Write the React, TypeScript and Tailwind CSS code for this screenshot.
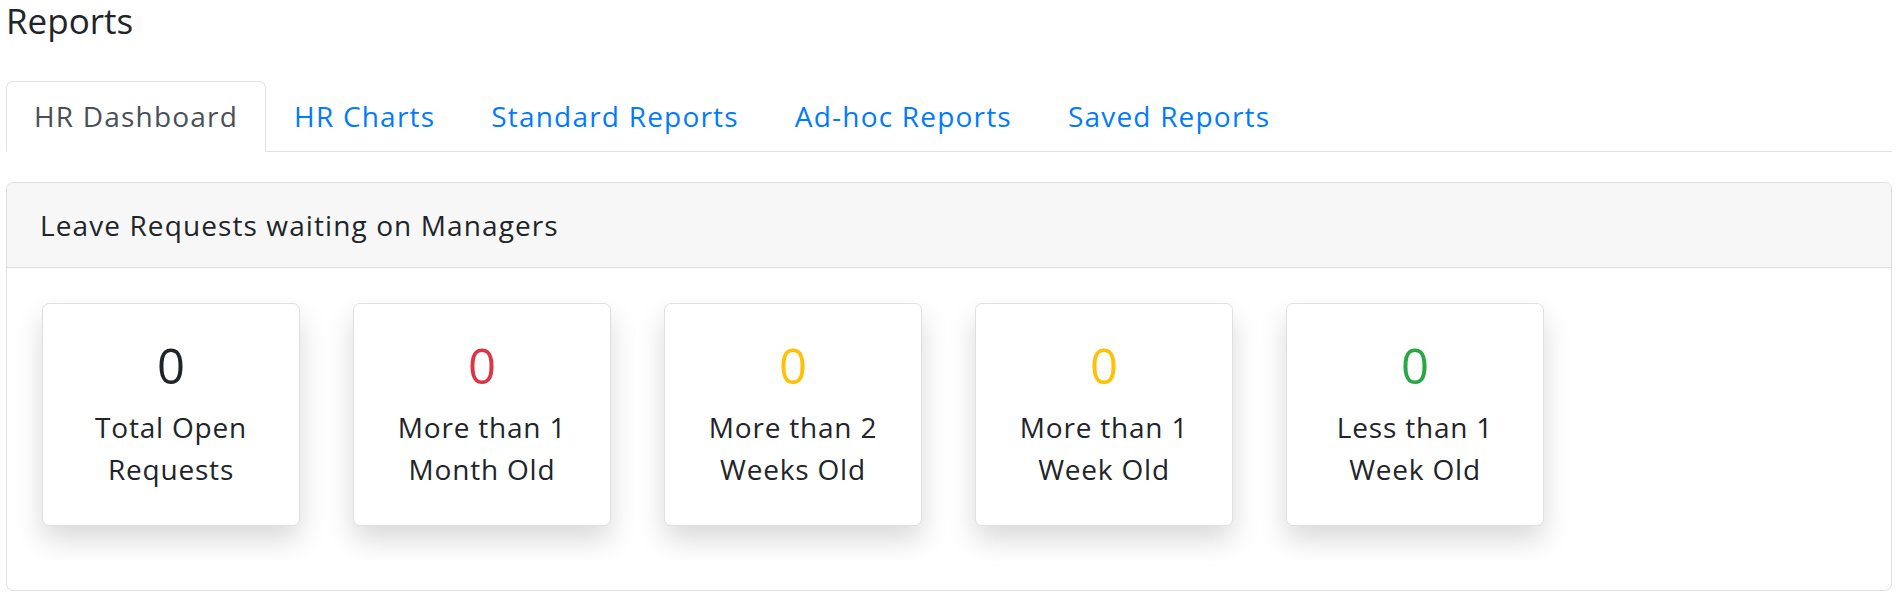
import React from 'react';

const tabs = ['HR Dashboard', 'HR Charts', 'Standard Reports', 'Ad-hoc Reports', 'Saved Reports'];

const stats: { value: number; color: string; line1: string; line2: string }[] = [
  { value: 0, color: 'text-[#212529]', line1: 'Total Open', line2: 'Requests' },
  { value: 0, color: 'text-[#dc3545]', line1: 'More than 1', line2: 'Month Old' },
  { value: 0, color: 'text-[#ffc107]', line1: 'More than 2', line2: 'Weeks Old' },
  { value: 0, color: 'text-[#ffc107]', line1: 'More than 1', line2: 'Week Old' },
  { value: 0, color: 'text-[#28a745]', line1: 'Less than 1', line2: 'Week Old' },
];

export default function App() {
  return (
    <div className="min-h-screen bg-white px-[6px] text-[#212529] font-['Open_Sans',sans-serif]">
      <h4 className="text-[35px] leading-[42px] mb-[39px]">Reports</h4>

      {/* tabs */}
      <nav className="flex border-b border-[#dee2e6]">
        {tabs.map((t, i) => (
          <button
            key={t}
            className={
              i === 0
                ? 'px-[27px] pt-[13px] pb-[14px] text-[28px] leading-[42px] tracking-[1.2px] border border-[#dee2e6] border-b-white rounded-t-[7px] -mb-px text-[#495057] bg-white'
                : 'px-[27px] pt-[13px] pb-[14px] text-[28px] leading-[42px] tracking-[1.2px] border border-transparent -mb-px text-[#007bff]'
            }
          >
            {t}
          </button>
        ))}
      </nav>

      {/* leave requests card */}
      <div className="mt-[30px] border border-[#dfdfdf] rounded-[7px] overflow-hidden">
        <div className="bg-[#f7f7f7] border-b border-[#dfdfdf] px-[33px] py-[21px] text-[28px] leading-[42px] tracking-[1.1px]">
          Leave Requests waiting on Managers
        </div>
        <div className="p-[35px] flex gap-[53px]">
          {stats.map((s, i) => (
            <div
              key={i}
              className="w-[258px] mb-[29px] bg-white border border-[#dfdfdf] rounded-[7px] shadow-[0_14px_28px_rgba(0,0,0,0.15)] p-[35px] text-center"
            >
              <div className={`text-[49px] leading-[52px] mb-[15px] ${s.color}`}>{s.value}</div>
              <div className="text-[28px] leading-[42px] tracking-[0.8px]">{s.line1}</div>
              <div className="text-[28px] leading-[42px] tracking-[0.8px]">{s.line2}</div>
            </div>
          ))}
        </div>
      </div>
    </div>
  );
}
